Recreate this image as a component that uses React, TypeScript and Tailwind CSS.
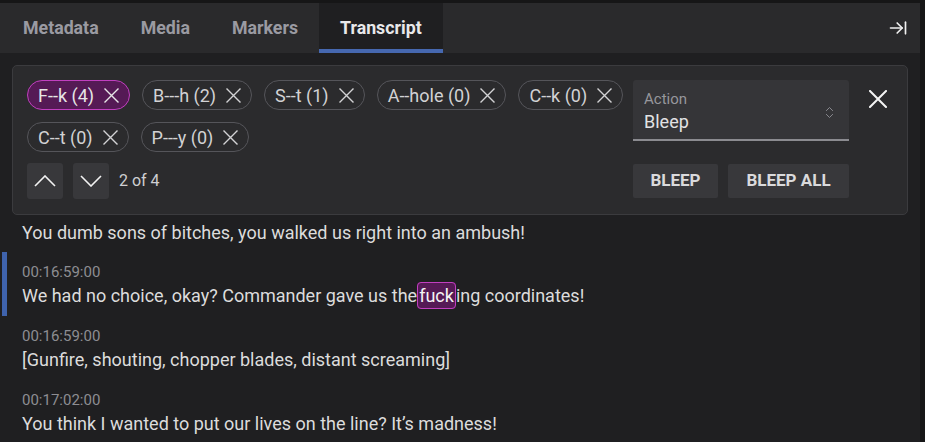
import { ArrowRightToLine, ChevronsUpDown } from "lucide-react";

const chips = [
  { label: "F--k (4)", active: true },
  { label: "B---h (2)" },
  { label: "S--t (1)" },
  { label: "A--hole (0)" },
  { label: "C--k (0)" },
  { label: "C--t (0)" },
  { label: "P---y (0)" },
];

const tabs = ["Metadata", "Media", "Markers", "Transcript"];

function Cross({ size, stroke = 1.5 }: { size: number; stroke?: number }) {
  return (
    <svg width={size} height={size} viewBox={`0 0 ${size} ${size}`} fill="none" stroke="currentColor" strokeWidth={stroke} strokeLinecap="square">
      <path d={`M1 1L${size - 1} ${size - 1}M${size - 1} 1L1 ${size - 1}`} />
    </svg>
  );
}

function Chevron({ up }: { up?: boolean }) {
  return (
    <svg width="22" height="12" viewBox="0 0 22 12" fill="none" stroke="currentColor" strokeWidth={1.6}>
      <path d={up ? "M1 11L11 1L21 11" : "M1 1L11 11L21 1"} />
    </svg>
  );
}

function Chip({ label, active }: { label: string; active?: boolean }) {
  return (
    <div
      className={
        active
          ? "flex h-[30px] items-center gap-[10px] rounded-full border border-[#c13fc0] bg-[#551a55] pl-[10px] pr-[10px] text-[18px] text-[#e6e6e6]"
          : "flex h-[30px] items-center gap-[10px] rounded-full border border-[#55555a] pl-[10px] pr-[10px] text-[18px] text-[#d2d2d4]"
      }
    >
      <span>{label}</span>
      <Cross size={15} stroke={1.4} />
    </div>
  );
}

function Entry({ time, children, current }: { time: string; children: React.ReactNode; current?: boolean }) {
  return (
    <div className="flex h-[64px] shrink-0">
      <div className={current ? "ml-[2px] w-[5px] bg-[#3f63ad]" : "ml-[2px] w-[5px]"} />
      <div className="pl-[15px] pt-[9px]">
        <div className="h-[22px] text-[15px] leading-[22px] text-[#8d8d92]">{time}</div>
        <div className="h-[26px] text-[18px] leading-[26px] text-[#dcdcdc]">{children}</div>
      </div>
    </div>
  );
}

export default function App() {
  return (
    <div
      className="flex h-[442px] w-[925px] overflow-hidden bg-[#161617] pt-[3px]"
      style={{ fontFamily: "Roboto, 'Noto Sans', sans-serif" }}
    >
      <div className="flex w-[920px] flex-col bg-[#1f1f21]">
        {/* Tabs */}
        <div className="flex h-[50px] shrink-0 items-stretch bg-[#2a2a2c] pl-[2px]">
          {tabs.map((t) =>
            t === "Transcript" ? (
              <div
                key={t}
                className="flex items-center border-b-[4px] border-[#4668b0] bg-[#1f1f21] px-[21px] pt-[4px] text-[17.75px] font-bold text-[#e8e8ea]"
              >
                {t}
              </div>
            ) : (
              <div key={t} className="flex items-center px-[21px] text-[17.75px] font-bold text-[#9a9aa2]">
                {t}
              </div>
            )
          )}
          <div className="flex-1" />
          <div className="flex items-center pr-[12px] text-[#f0f0f0]">
            <ArrowRightToLine size={20} strokeWidth={2} />
          </div>
        </div>

        {/* Search panel */}
        <div className="mx-[12px] mt-[12px] flex h-[150px] shrink-0 rounded-[5px] border border-[#3b3b3e] bg-[#2b2b2d] pl-[14px] pt-[14px]">
          <div className="w-[600px] shrink-0">
            <div className="flex flex-wrap gap-x-[12px] gap-y-[12px]">
              {chips.map((c) => (
                <Chip key={c.label} label={c.label} active={c.active} />
              ))}
            </div>
            <div className="mt-[11px] flex items-center gap-[10px]">
              <button className="flex h-[36px] w-[36px] items-center justify-center rounded-[3px] bg-[#38383b] text-[#f2f2f2]">
                <Chevron up />
              </button>
              <button className="flex h-[36px] w-[36px] items-center justify-center rounded-[3px] bg-[#38383b] text-[#f2f2f2]">
                <Chevron />
              </button>
              <span className="text-[16px] text-[#cfcfd2]">2 of 4</span>
            </div>
          </div>
          <div className="ml-[6px] flex w-[216px] shrink-0 flex-col">
            <div className="flex h-[61px] items-center justify-between rounded-t-[3px] border-b-[2px] border-[#8b8b90] bg-[#353538] pl-[11px] pr-[12px] pt-[5px]">
              <div className="flex flex-col">
                <span className="text-[15px] leading-[19px] text-[#97979c]">Action</span>
                <span className="text-[18px] leading-[26px] text-[#e2e2e4]">Bleep</span>
              </div>
              <ChevronsUpDown size={15} strokeWidth={1.5} className="text-[#8e8e94]" />
            </div>
            <div className="mt-[23px] flex gap-[10px]">
              <button className="h-[34px] w-[85px] rounded-[2px] bg-[#38383b] text-[17px] font-bold text-[#dadadc]">
                BLEEP
              </button>
              <button className="h-[34px] w-[121px] rounded-[2px] bg-[#38383b] text-[17px] font-bold text-[#dadadc]">
                BLEEP ALL
              </button>
            </div>
          </div>
          <div className="flex w-[60px] justify-center pt-[10px] text-[#f4f4f4]">
            <Cross size={18} stroke={2} />
          </div>
        </div>

        {/* Transcript */}
        <div className="flex flex-col pt-[5px]">
          <div className="h-[32px] shrink-0 pl-[22px] text-[18px] leading-[26px] text-[#dcdcdc]">
            You dumb sons of bitches, you walked us right into an ambush!
          </div>
          <Entry time="00:16:59:00" current>
            We had no choice, okay? Commander gave us the
            <span className="rounded-[4px] border border-[#c13fc0] bg-[#551a55] px-[1px] py-[2px] text-[#f4f4f4]">fuck</span>
            ing coordinates!
          </Entry>
          <Entry time="00:16:59:00">[Gunfire, shouting, chopper blades, distant screaming]</Entry>
          <Entry time="00:17:02:00">You think I wanted to put our lives on the line? It’s madness!</Entry>
        </div>
      </div>
    </div>
  );
}
